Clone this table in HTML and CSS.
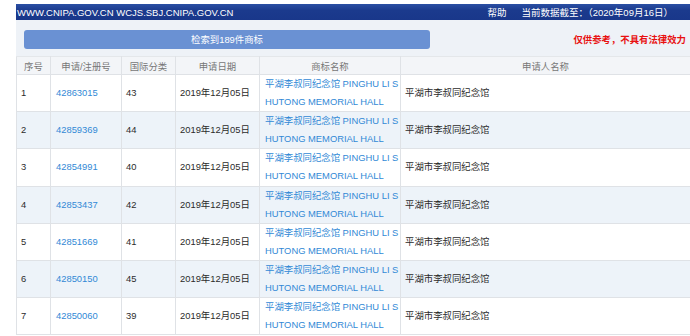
FILE: index.html
```html
<!DOCTYPE html>
<html lang="zh">
<head>
<meta charset="utf-8">
<title>商标检索</title>
<link rel="stylesheet" href="styles.css">
</head>
<body>
<div class="page">
  <div class="topbar">
    <span class="site">WWW.CNIPA.GOV.CN WCJS.SBJ.CNIPA.GOV.CN</span>
    <span class="help">帮助</span>
    <span class="date">当前数据截至：（2020年09月16日）</span>
  </div>
  <div class="toolbar">
    <div class="result-btn">检索到189件商标</div>
    <div class="notice">仅供参考，不具有法律效力</div>
  </div>
  <table class="grid">
    <colgroup>
      <col class="c1"><col class="c2"><col class="c3"><col class="c4"><col class="c5"><col class="c6">
    </colgroup>
    <thead>
      <tr><th>序号</th><th>申请/注册号</th><th>国际分类</th><th>申请日期</th><th>商标名称</th><th>申请人名称</th></tr>
    </thead>
    <tbody>
      <tr><td>1</td><td class="link">42863015</td><td>43</td><td>2019年12月05日</td><td class="link tm">平湖李叔同纪念馆 PINGHU LI S<br>HUTONG MEMORIAL HALL</td><td>平湖市李叔同纪念馆</td></tr>
      <tr><td>2</td><td class="link">42859369</td><td>44</td><td>2019年12月05日</td><td class="link tm">平湖李叔同纪念馆 PINGHU LI S<br>HUTONG MEMORIAL HALL</td><td>平湖市李叔同纪念馆</td></tr>
      <tr><td>3</td><td class="link">42854991</td><td>40</td><td>2019年12月05日</td><td class="link tm">平湖李叔同纪念馆 PINGHU LI S<br>HUTONG MEMORIAL HALL</td><td>平湖市李叔同纪念馆</td></tr>
      <tr><td>4</td><td class="link">42853437</td><td>42</td><td>2019年12月05日</td><td class="link tm">平湖李叔同纪念馆 PINGHU LI S<br>HUTONG MEMORIAL HALL</td><td>平湖市李叔同纪念馆</td></tr>
      <tr><td>5</td><td class="link">42851669</td><td>41</td><td>2019年12月05日</td><td class="link tm">平湖李叔同纪念馆 PINGHU LI S<br>HUTONG MEMORIAL HALL</td><td>平湖市李叔同纪念馆</td></tr>
      <tr><td>6</td><td class="link">42850150</td><td>45</td><td>2019年12月05日</td><td class="link tm">平湖李叔同纪念馆 PINGHU LI S<br>HUTONG MEMORIAL HALL</td><td>平湖市李叔同纪念馆</td></tr>
      <tr><td>7</td><td class="link">42850060</td><td>39</td><td>2019年12月05日</td><td class="link tm">平湖李叔同纪念馆 PINGHU LI S<br>HUTONG MEMORIAL HALL</td><td>平湖市李叔同纪念馆</td></tr>
    </tbody>
  </table>
</div>
</body>
</html>
```
FILE: styles.css
```css
html, body {
  margin: 0;
  padding: 0;
  background: #fff;
  overflow: hidden;
}
body {
  font-family: "Liberation Sans", "Noto Sans CJK SC", sans-serif;
  font-size: 9.4px;
  color: #2b2b2b;
}
.page {
  padding: 4px 0 0 16px;
}
.topbar {
  display: flex;
  align-items: center;
  height: 16px;
  background: linear-gradient(#2a4fa3, #1b3a8d 40%, #19378a);
  color: #fff;
  padding: 0 17px 0 1px;
  font-size: 9.5px;
  white-space: nowrap;
}
.topbar .site {
  flex: 1;
}
.topbar .help {
  margin-right: 15px;
}
.toolbar {
  display: flex;
  align-items: center;
  justify-content: space-between;
  height: 36px;
  background: #eef2f7;
  padding: 0 4px 0 8px;
}
.result-btn {
  width: 406px;
  height: 19px;
  line-height: 19px;
  margin-top: 2px;
  background: #6a91d3;
  border-radius: 3px;
  color: #fff;
  text-align: center;
  font-size: 9.4px;
}
.notice {
  color: #e81010;
  font-weight: bold;
  font-size: 9.4px;
  margin-top: 2px;
}
.grid {
  width: 674px;
  border-collapse: collapse;
  table-layout: fixed;
}
.c1 { width: 34px; }
.c2 { width: 71px; }
.c3 { width: 54px; }
.c4 { width: 84px; }
.c5 { width: 141px; }
.c6 { width: 290px; }
.grid th {
  height: 17px;
  padding: 0;
  background: #f3f5f8;
  color: #777;
  font-weight: normal;
  text-align: center;
  border: 1px solid #dfe2e6;
  border-top: 1px solid #e4e7ea;
}
.grid td {
  height: 36.2px;
  padding: 0 2px 0 4px;
  line-height: 18.1px;
  border: 1px solid #dfe2e6;
  vertical-align: middle;
  white-space: nowrap;
  overflow: hidden;
}
.grid tbody tr:nth-child(even) td {
  background: #edf3f9;
}
.grid td.link {
  color: #3189d6;
}
.grid td.tm {
  padding-left: 5px;
}
.grid td:nth-child(2) {
  padding-left: 5px;
}
```
